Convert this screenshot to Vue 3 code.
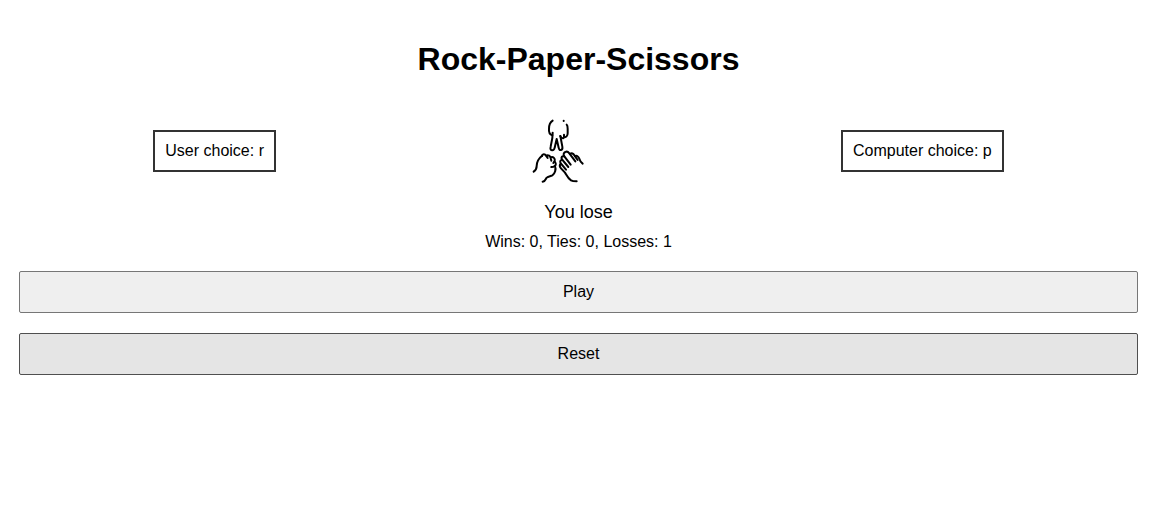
<script setup>
import { ref } from 'vue'

const user = ref('r')
const computer = ref('p')
const result = ref('You lose')
const wins = ref(0)
const ties = ref(0)
const losses = ref(1)

const choices = ['r', 'p', 's']

function play() {
  const a = Math.floor(Math.random() * 3)
  const b = Math.floor(Math.random() * 3)
  user.value = choices[a]
  computer.value = choices[b]
  if (a === b) {
    result.value = 'You tie'
    ties.value++
  } else if ((a - b + 3) % 3 === 1) {
    result.value = 'You win'
    wins.value++
  } else {
    result.value = 'You lose'
    losses.value++
  }
}

function reset() {
  wins.value = 0
  ties.value = 0
  losses.value = 0
}
</script>

<template>
  <main class="game">
    <h1>Rock-Paper-Scissors</h1>
    <section class="board">
      <div class="choice">User choice: {{ user }}</div>
      <svg class="hands" viewBox="0 0 180 222" aria-hidden="true">
        <!-- scissors -->
        <path d="M74 20C66 25 63 34 63 44C62 54 65 62 73 64" />
        <path d="M74 56L73 72L68 98C66 105 68 109 73 109C77 109 79 106 80 101L86 75L92 101C93 107 96 109 99 108C103 107 104 103 103 98L97 66" />
        <path d="M97 66C99 73 107 75 108 69L108 62M108 69C114 71 119 66 119 58L119 44C119 39 118 34 116 32" />
        <path d="M107 20L107 21" />
        <!-- rock -->
        <path d="M17 173C23 169 26 163 26 156C26 144 31 134 42 125" />
        <path d="M42 126C43 119 51 119 54 125L59 132M54 125C61 121 67 127 68 132L70 140M68 130C76 127 82 134 80 141L76 147" />
        <path d="M80 143C86 149 84 156 76 158L70 159" />
        <path d="M81 156C85 166 81 179 73 184C67 187 59 187 55 192C52 198 51 202 44 203" />
        <!-- paper -->
        <path d="M128 152L109 127C105 121 107 116 112 114C117 111 121 114 124 118L142 142" />
        <path d="M126 120C131 116 136 119 139 124L149 138" />
        <path d="M141 126C147 123 151 128 154 134C156 141 160 146 164 149" />
        <path d="M109 127C102 125 98 131 102 136L121 159" />
        <path d="M102 137C96 139 95 144 99 149L114 167" />
        <path d="M98 149C94 154 95 159 99 163L111 176C115 182 119 193 129 199C134 202 141 202 146 202" />
      </svg>
      <div class="choice">Computer choice: {{ computer }}</div>
    </section>
    <p class="result">{{ result }}</p>
    <p class="score">Wins: {{ wins }}, Ties: {{ ties }}, Losses: {{ losses }}</p>
    <button type="button" class="play" @click="play">Play</button>
    <button type="button" class="reset" @click="reset">Reset</button>
  </main>
</template>

<style>
body {
  margin: 0;
  background: #fff;
}
</style>

<style scoped>
.game {
  display: flex;
  flex-direction: column;
  padding: 40px 11px 20px 19px;
  color: #000;
  font-family: "Liberation Sans", Arial, sans-serif;
  font-size: 16px;
  line-height: 18px;
  text-align: center;
}
h1 {
  margin: 0 0 36px;
  font-size: 32px;
  line-height: 38px;
}
.board {
  display: flex;
  align-items: center;
  justify-content: space-between;
  padding: 0 12%;
}
.choice {
  padding: 10px;
  border: 2px solid #333;
}
.hands {
  width: 60px;
  height: 74px;
  fill: none;
  stroke: #000;
  stroke-width: 6;
  stroke-linecap: round;
  stroke-linejoin: round;
}
p {
  margin: 0;
}
.result {
  margin-top: 14px;
  font-size: 18px;
  line-height: 20px;
}
.score {
  margin-top: 11px;
}
button {
  margin-top: 20px;
  padding: 10px;
  border: 1px solid #767676;
  border-radius: 2px;
  background: #efefef;
  color: #000;
  font: inherit;
  line-height: 20px;
}
.reset {
  border-color: #4f4f4f;
  background: #e5e5e5;
}
</style>
